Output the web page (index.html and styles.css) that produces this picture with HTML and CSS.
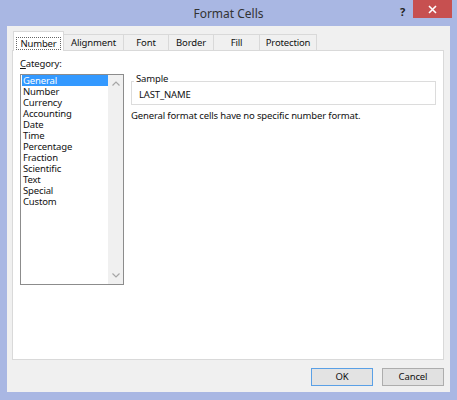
FILE: index.html
```html
<!DOCTYPE html>
<html>
<head>
<meta charset="utf-8">
<link rel="stylesheet" href="styles.css">
</head>
<body>
<div class="window">
  <div class="titlebar">
    <div></div>
    <div class="title">Format Cells</div>
    <div class="controls">
      <span class="help">?</span>
      <span class="close"><svg width="9" height="9" viewBox="0 0 9 9"><path d="M1 1 L8 8 M8 1 L1 8" stroke="#fff" stroke-width="1.6" fill="none"/></svg></span>
    </div>
  </div>
  <div class="client">
    <div class="tabs">
      <div class="tab active w-number"><span class="focus">Number</span></div>
      <div class="tab w-align">Alignment</div>
      <div class="tab w-font">Font</div>
      <div class="tab w-border">Border</div>
      <div class="tab w-fill">Fill</div>
      <div class="tab w-prot">Protection</div>
    </div>
    <div class="panel">
      <div class="left">
        <div class="label"><u>C</u>ategory:</div>
        <div class="listbox">
          <ul class="items">
            <li class="selected">General</li>
            <li>Number</li>
            <li>Currency</li>
            <li>Accounting</li>
            <li>Date</li>
            <li>Time</li>
            <li>Percentage</li>
            <li>Fraction</li>
            <li>Scientific</li>
            <li>Text</li>
            <li>Special</li>
            <li>Custom</li>
          </ul>
          <div class="scrollbar">
            <svg width="8" height="5" viewBox="0 0 8 5"><path d="M0.5 4.5 L4 1 L7.5 4.5" stroke="#a6a6a6" stroke-width="1.2" fill="none"/></svg>
            <svg width="8" height="5" viewBox="0 0 8 5"><path d="M0.5 0.5 L4 4 L7.5 0.5" stroke="#a6a6a6" stroke-width="1.2" fill="none"/></svg>
          </div>
        </div>
      </div>
      <div class="right">
        <fieldset class="sample">
          <legend>Sample</legend>
          <div class="sample-value">LAST_NAME</div>
        </fieldset>
        <p class="desc">General format cells have no specific number format.</p>
      </div>
    </div>
    <div class="footer">
      <button class="btn default">OK</button>
      <button class="btn">Cancel</button>
    </div>
  </div>
</div>
</body>
</html>
```

FILE: styles.css
```css
* { box-sizing: border-box; }
html, body { margin: 0; padding: 0; }
body {
  font-family: "Noto Sans", "Open Sans", sans-serif;
  font-size: 9.5px;
  letter-spacing: -0.15px;
  color: #111;
}
.window {
  width: 457px;
  height: 400px;
  background: #a9b7e3;
  display: flex;
  flex-direction: column;
}
.titlebar {
  height: 26px;
  display: grid;
  grid-template-columns: 1fr auto 1fr;
}
.title {
  line-height: 27px;
  font-size: 12px;
  letter-spacing: 0;
  color: #333;
}
.controls {
  display: flex;
  justify-content: flex-end;
  align-items: flex-start;
  padding-right: 5px;
}
.help {
  font-weight: bold;
  font-size: 11px;
  color: #222;
  line-height: 16px;
  margin-top: 4px;
  margin-right: 8px;
}
.close {
  width: 39px;
  height: 18px;
  background: #c75050;
  display: flex;
  align-items: center;
  justify-content: center;
}
.client {
  margin: 0 7px 8px 7px;
  height: 366px;
  background: #f0f0f0;
  padding: 5px 6px 6px 5px;
  display: flex;
  flex-direction: column;
}
.tabs {
  display: flex;
  align-items: flex-end;
  height: 19px;
  padding-left: 1px;
}
.tab {
  height: 16px;
  border: 1px solid #d9d9d9;
  border-bottom: none;
  margin-right: -1px;
  background: #f0f0f0;
  display: flex;
  align-items: center;
  justify-content: center;
  line-height: 12px;
}
.tab.active {
  height: 20px;
  margin-bottom: -1px;
  background: #fff;
  position: relative;
  z-index: 1;
  padding-top: 3px;
}
.focus {
  border: 1px dotted #666;
  padding: 0 3px;
  line-height: 11px;
  height: 13px;
}
.w-number { width: 51px; }
.w-align { width: 61px; }
.w-font { width: 46px; }
.w-border { width: 46px; }
.w-fill { width: 47px; }
.w-prot { width: 58px; }
.panel {
  height: 310px;
  background: #fff;
  border: 1px solid #d9d9d9;
  padding: 7px;
  display: grid;
  grid-template-columns: 104px 1fr;
  column-gap: 7px;
  align-items: start;
}
.label {
  line-height: 12px;
  margin-bottom: 4px;
}
.listbox {
  height: 211px;
  border: 1px solid #8c8c8c;
  display: flex;
}
.items {
  list-style: none;
  margin: 0;
  padding: 0 0 0 1px;
  flex: 1;
}
.items li {
  height: 11px;
  line-height: 11px;
  padding-left: 1px;
}
.items li.selected {
  background: #3399ff;
  color: #fff;
}
.scrollbar {
  width: 15px;
  background: #f0f0f0;
  display: flex;
  flex-direction: column;
  justify-content: space-between;
  align-items: center;
  padding: 6px 0 6px;
}
.right {
  padding-top: 15px;
}
.sample {
  margin: 0;
  border: 1px solid #dcdcdc;
  padding: 0 4px 3px 2px;
}
.sample legend {
  padding: 0 2px 4px;
  line-height: 12px;
}
.sample-value {
  line-height: 12px;
  padding-left: 5px;
}
.desc {
  margin: 5px 0 0;
  line-height: 12px;
}
.footer {
  margin-top: 8px;
  display: flex;
  justify-content: flex-end;
  gap: 9px;
}
.btn {
  width: 62px;
  height: 18px;
  border: 1px solid #adadad;
  background: #e1e1e1;
  font-family: inherit;
  font-size: 9.5px;
  letter-spacing: -0.1px;
  color: #111;
  padding: 0;
  line-height: 16px;
}
.btn.default {
  border-color: #5aa0e6;
  background: #e3e3e3;
}
```
